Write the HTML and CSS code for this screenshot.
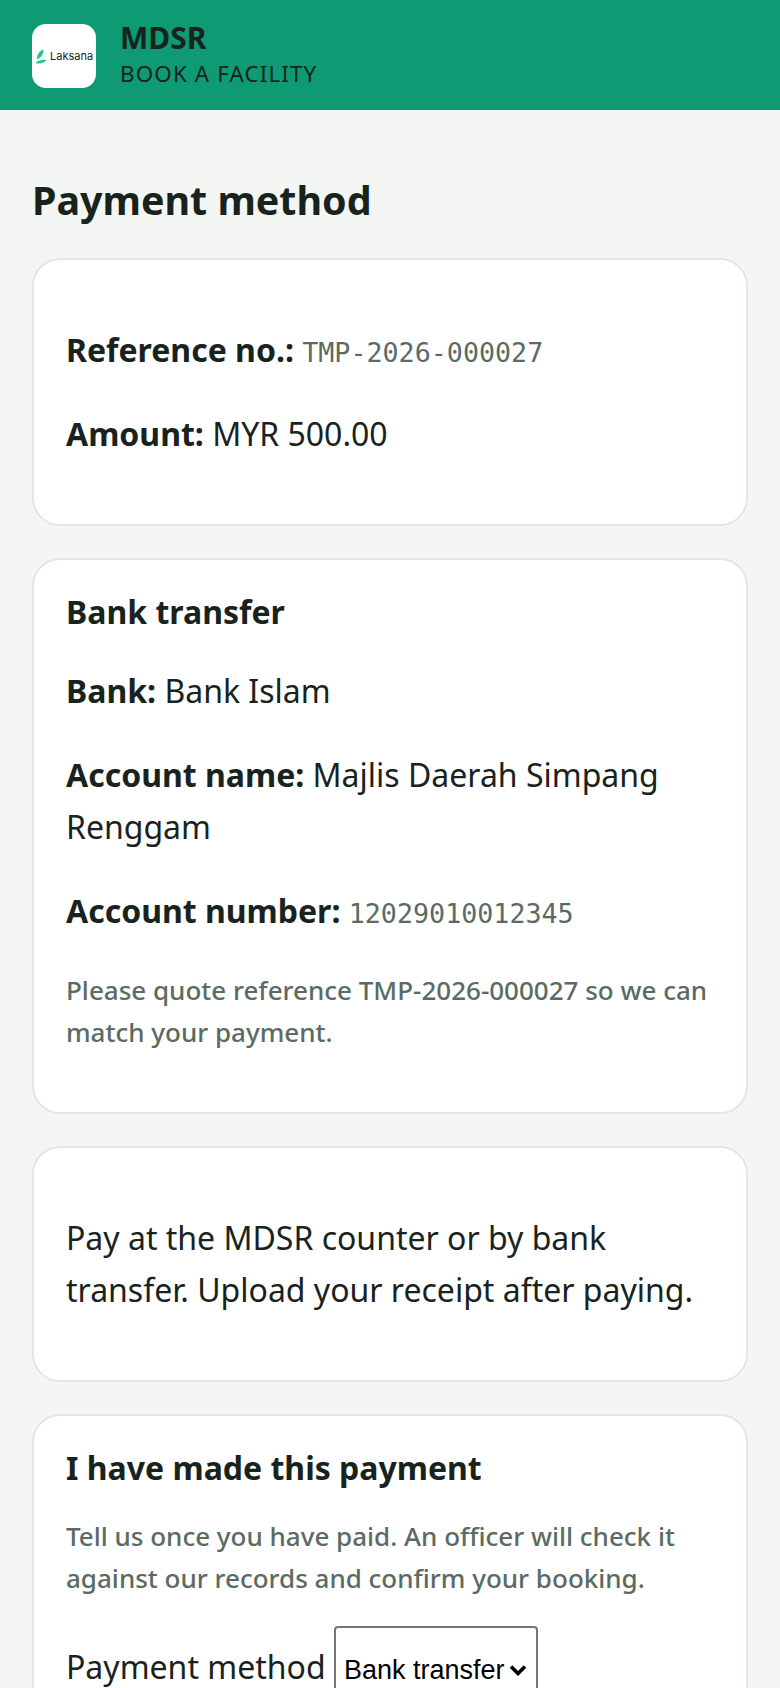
FILE: index.html
```html
<!DOCTYPE html>
<html lang="en">
<head>
<meta charset="utf-8">
<title>Payment method</title>
<link rel="stylesheet" href="styles.css">
</head>
<body>
<header class="topbar">
  <div class="logo">
    <svg class="leaf" viewBox="0 0 12 15" width="12" height="15" aria-hidden="true">
      <path d="M8 0.5C9 4 7 8 2 10.5C1.5 6.5 4 2.5 8 0.5Z" fill="#1fc98b"/>
      <path d="M0.5 14C3 11 8 10.5 11.5 11C9.5 14 4.5 15.5 0.5 14Z" fill="#1fc98b"/>
    </svg>
    <span class="logo-text">Laksana</span>
  </div>
  <div class="brand">
    <div class="brand-name">MDSR</div>
    <div class="brand-sub">BOOK A FACILITY</div>
  </div>
</header>
<main class="content">
  <h1>Payment method</h1>
  <section class="card">
    <p><strong>Reference no.:</strong> <code>TMP-2026-000027</code></p>
    <p><strong>Amount:</strong> MYR 500.00</p>
  </section>
  <section class="card">
    <h2>Bank transfer</h2>
    <p><strong>Bank:</strong> Bank Islam</p>
    <p><strong>Account name:</strong> Majlis Daerah Simpang Renggam</p>
    <p><strong>Account number:</strong> <code>12029010012345</code></p>
    <p class="muted">Please quote reference TMP-2026-000027 so we can match your payment.</p>
  </section>
  <section class="card">
    <p>Pay at the MDSR counter or by bank transfer. Upload your receipt after paying.</p>
  </section>
  <section class="card">
    <h2>I have made this payment</h2>
    <p class="muted">Tell us once you have paid. An officer will check it against our records and confirm your booking.</p>
    <p class="field"><label for="method">Payment method</label> <select id="method" class="select"><option>Bank transfer</option><option>Counter</option></select></p>
  </section>
</main>
</body>
</html>
```
FILE: styles.css
```css
* { box-sizing: border-box; }
html, body { margin: 0; padding: 0; }
body {
  background: #f4f6f4;
  color: #18231e;
  font-family: "Noto Sans", sans-serif;
  font-size: 32px;
  line-height: 52px;
}
.topbar {
  display: flex;
  align-items: center;
  gap: 24px;
  height: 110px;
  padding: 2px 32px 0;
  background: #0e9a72;
}
.logo {
  display: flex;
  align-items: center;
  gap: 3px;
  width: 64px;
  height: 64px;
  padding-left: 3px;
  border-radius: 14px;
  background: #fff;
}
.leaf { flex: none; }
.logo-text {
  font-family: "Inter", sans-serif;
  font-size: 11px;
  line-height: 1;
  color: #18231e;
}
.brand-name { font-size: 30px; font-weight: 700; line-height: 36px; }
.brand-sub { font-size: 22.4px; letter-spacing: 0.05em; line-height: 36px; }
.content { padding: 32px; }
h1 { margin: 34px 0 33px; font-size: 39.4px; font-weight: 700; line-height: 1.25; }
h2 { margin: 0; font-size: 32px; font-weight: 700; line-height: 40px; }
.card {
  margin-bottom: 32px;
  padding: 32px;
  background: #fff;
  border: 2px solid #e2e7e3;
  border-radius: 28px;
}
.card p { margin: 32px 0; }
.card h2 + p { margin-top: 33px; }
.card h2 + .muted { margin-top: 27px; }
code {
  font-family: "DejaVu Sans Mono", monospace;
  font-size: 26.7px;
  line-height: 1;
  color: #5a6b63;
}
.card .muted { color: #5a6b63; font-size: 26px; line-height: 42px; font-weight: 500; margin-bottom: 27px; }
.card .muted + .field { margin-top: 27px; }
.select {
  appearance: none;
  width: 204px;
  height: 88px;
  padding: 0 0 0 8px;
  border: 2px solid #767676;
  border-radius: 4px;
  color: #000;
  font-family: "Liberation Sans", sans-serif;
  font-size: 27px;
  background: #fff url("data:image/svg+xml,%3Csvg xmlns='http://www.w3.org/2000/svg' viewBox='0 0 18 12'%3E%3Cpath d='M2 2.5L9 9.5L16 2.5' fill='none' stroke='%23000' stroke-width='3.6'/%3E%3C/svg%3E") no-repeat right 9px center / 18px 12px;
}
```
